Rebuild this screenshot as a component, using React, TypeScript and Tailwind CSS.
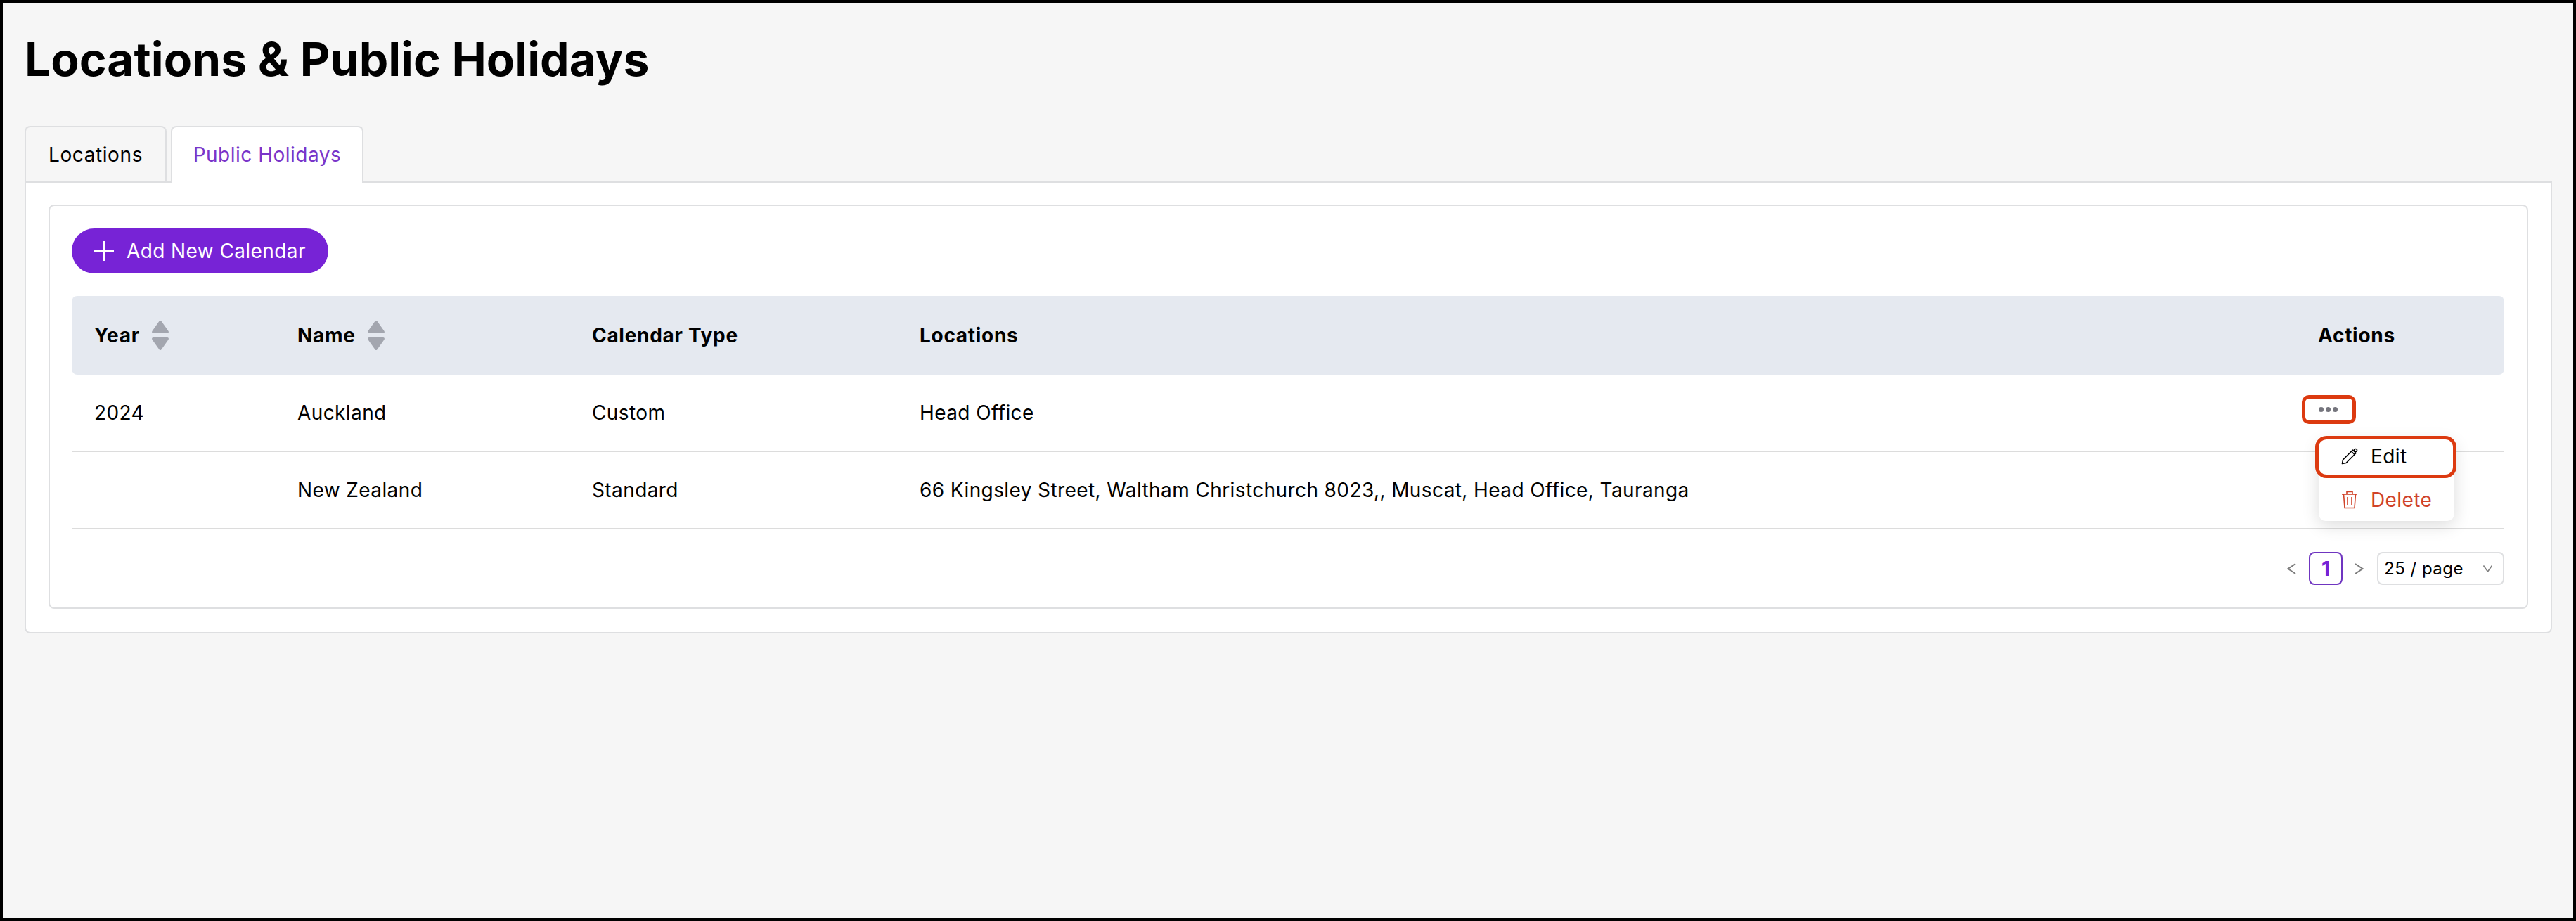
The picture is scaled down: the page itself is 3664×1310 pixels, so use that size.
const font = 'font-["Inter",sans-serif]'

function SortIcon() {
  return (
    <svg width="26" height="44" viewBox="0 0 26 44" className="ml-[16px] shrink-0" fill="#a3a6af">
      <path d="M13 1 C14 1 14.6 1.6 15 2.5 L24.6 16 C25.4 17.4 24.8 19 23 19 L3 19 C1.2 19 .6 17.4 1.4 16 L11 2.5 C11.4 1.6 12 1 13 1Z" />
      <path d="M13 43 C14 43 14.6 42.4 15 41.5 L24.6 28 C25.4 26.6 24.8 25 23 25 L3 25 C1.2 25 .6 26.6 1.4 28 L11 41.5 C11.4 42.4 12 43 13 43Z" />
    </svg>
  )
}

function Dots() {
  return (
    <span className="flex gap-[3px] pr-[3px]">
      <span className="w-[7px] h-[7px] rounded-full bg-[#75757d]"></span>
      <span className="w-[7px] h-[7px] rounded-full bg-[#75757d]"></span>
      <span className="w-[7px] h-[7px] rounded-full bg-[#75757d]"></span>
    </span>
  )
}

const rows = [
  { year: '2024', name: 'Auckland', type: 'Custom', locations: 'Head Office' },
  {
    year: '',
    name: 'New Zealand',
    type: 'Standard',
    locations: '66 Kingsley Street, Waltham Christchurch 8023,, Muscat, Head Office, Tauranga'
  }
]

function App(): JSX.Element {
  return (
    <div className={`${font} h-screen border-4 border-black bg-[#f6f6f6] text-black pl-[31px] pr-[30px] overflow-hidden`}>
      <h1 className="pt-[40px] h-[120px] text-[66px] leading-[80px] font-bold tracking-[0px]">
        Locations &amp; Public Holidays
      </h1>
      <div className="flex gap-[6px] mt-[55px] -mb-[2px] relative z-10">
        <div className="h-[79px] w-[202px] flex items-center justify-center text-[28px] tracking-[0.6px] border-2 border-b-0 border-[#dedfe1] rounded-t-[8px] bg-[#f6f6f6]">
          Locations
        </div>
        <div className="h-[81px] w-[274px] flex items-center justify-center text-[28px] tracking-[0.5px] text-[#7a35c9] border-2 border-b-0 border-[#dedfe1] rounded-t-[8px] bg-white pb-[2px]">
          Public Holidays
        </div>
      </div>
      <div className="bg-white border-2 border-[#dedfe1] rounded-b-[8px] pl-[32px] pr-[32px] pt-[31px] pb-[33px]">
        <div className="border-2 border-[#dedfe1] rounded-[8px] pl-[31px] pr-[32px] pt-[32px] pb-[32px]">
          <button className="flex items-center h-[64px] w-[365px] pl-[32px] rounded-full bg-[#7723d6] text-white text-[28px] tracking-[0.4px]">
            <svg width="28" height="28" viewBox="0 0 28 28" stroke="currentColor" strokeWidth="2" className="mr-[18px]">
              <path d="M14 0V28M0 14H28" />
            </svg>
            Add New Calendar
          </button>
          <div className="mt-[32px] grid grid-cols-[289px_418px_467px_1fr_297px] h-[112px] items-center bg-[#e5e9f0] rounded-[8px] text-[28px] font-bold tracking-[0.7px]">
            <div className="pl-[32px] flex items-center">
              Year
              <SortIcon />
            </div>
            <div className="pl-[32px] flex items-center">
              Name
              <SortIcon />
            </div>
            <div className="pl-[33px]">Calendar Type</div>
            <div className="pl-[32px]">Locations</div>
            <div className="pl-[32px]">Actions</div>
          </div>
          {rows.map((row, i) => (
            <div
              key={row.name}
              className="grid grid-cols-[289px_418px_467px_1fr_297px] h-[110px] items-center border-b-2 border-[#dcdcdc] text-[28px] tracking-[0.4px]"
            >
              <div className="pl-[32px]">{row.year}</div>
              <div className="pl-[32px]">{row.name}</div>
              <div className="pl-[33px]">{row.type}</div>
              <div className="pl-[32px]">{row.locations}</div>
              <div className="pl-[9px] relative">
                <div
                  className={
                    'w-[77px] h-[41px] mb-[10px] flex items-center justify-center rounded-[10px] border-[5px] ' +
                    (i === 0 ? 'border-[#dc3a10]' : 'border-transparent')
                  }
                >
                  <Dots />
                </div>
                {i === 0 && (
                  <div className="absolute z-20 left-[33px] top-[62px] w-[193px] h-[117px] bg-white rounded-[10px] shadow-[0_6px_24px_rgba(0,0,0,0.14)]">
                    <div className="flex items-center h-[50px] pl-[32px] text-[28px]">
                      <svg width="24" height="24" viewBox="0 0 24 24" fill="none" stroke="#000" strokeWidth="1.6" strokeLinejoin="round" className="mr-[18px]">
                        <path d="M1.5 22.5 L2.5 17 L16.5 3 L21 7.5 L7 21.5 Z" />
                        <path d="M14.5 5 L19 9.5" />
                        <circle cx="20.5" cy="3.5" r="2" />
                      </svg>
                      Edit
                    </div>
                    <div className="flex items-center h-[67px] pl-[32px] pt-[7px] text-[28px] text-[#d0432a]">
                      <svg width="24" height="26" viewBox="0 0 24 26" fill="none" stroke="#d0432a" strokeWidth="1.6" className="mr-[18px]">
                        <path d="M1 5H23" />
                        <path d="M8 5V1.5H16V5" />
                        <path d="M3.5 5L5 24.5H19L20.5 5" />
                        <path d="M9 9V20M15 9V20" />
                      </svg>
                      Delete
                    </div>
                    <div className="absolute -left-[5px] -top-[4px] w-[201px] h-[60px] rounded-[16px] border-[5px] border-[#dc3a10]"></div>
                  </div>
                )}
              </div>
            </div>
          ))}
          <div className="mt-[32px] flex items-center justify-end h-[47px]">
            <svg width="13" height="16" viewBox="0 0 13 16" fill="none" stroke="#7d7d7d" strokeWidth="2">
              <path d="M12 1L1.5 8L12 15" />
            </svg>
            <div className="ml-[18px] w-[48px] h-[47px] flex items-center justify-center border-2 border-[#6f35c0] rounded-[8px] text-[#7723d6] text-[28px] font-bold">
              1
            </div>
            <svg width="13" height="16" viewBox="0 0 13 16" fill="none" stroke="#7d7d7d" strokeWidth="2" className="ml-[17px]">
              <path d="M1 1L11.5 8L1 15" />
            </svg>
            <div className="ml-[19px] w-[181px] h-[47px] flex items-center justify-between pl-[8px] pr-[15px] border-2 border-[#dedfe1] rounded-[8px] text-[24px] tracking-[0.5px]">
              25 / page
              <svg width="13" height="10" viewBox="0 0 13 10" fill="none" stroke="#7d7d7d" strokeWidth="1.6">
                <path d="M.5 .5L6.5 9L12.5 .5" />
              </svg>
            </div>
          </div>
        </div>
      </div>
    </div>
  )
}

export default App
